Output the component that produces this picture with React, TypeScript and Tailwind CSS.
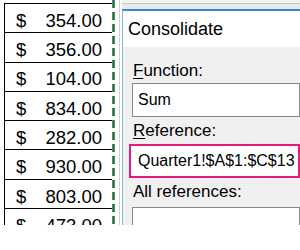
const amounts = ["354.00", "356.00", "104.00", "834.00", "282.00", "930.00", "803.00", "473.00"];

const Cell = ({ value }: { value: string }) => {
    return (
        <div className="h-[29.3px] shrink-0 border-t border-black flex items-end justify-between pl-[11px] pr-[10px] pb-[2px] text-[18.5px] leading-none text-black">
            <span>$</span>
            <span>{value}</span>
        </div>
    );
};

const Label = ({ hot, rest }: { hot: string; rest: string }) => (
    <div className="h-[20px] pl-[10px] text-[17px] leading-[20px] text-black">
        {hot && <span className="underline underline-offset-2">{hot}</span>}
        {rest}
    </div>
);

export default function App() {
    return (
        <div className="w-[300px] h-[250px] bg-white overflow-hidden" style={{ fontFamily: '"Liberation Sans", Arial, sans-serif' }}>
            <div className="h-[225px] flex overflow-hidden">
                {/* cells */}
                <div className="w-[112px] shrink-0 pt-[3px] pl-[4px]">
                    <div className="border-l border-black flex flex-col h-full">
                        {amounts.map((a) => (
                            <Cell key={a} value={a} />
                        ))}
                    </div>
                </div>
                {/* copy marquee */}
                <svg width="3" height="225" className="shrink-0">
                    <line x1="1.5" y1="0" x2="1.5" y2="225" stroke="#1e6b3c" strokeWidth="2.5" strokeDasharray="8 4" />
                </svg>
                <div className="w-[4px] shrink-0" />
                <div className="w-px shrink-0 bg-[#d0d0d0]" />
                <div className="w-[2px] shrink-0" />

                {/* dialog */}
                <div className="flex-1 flex flex-col min-w-0">
                    <div className="h-[9px] shrink-0 bg-[#e9e9e9] flex flex-col">
                        <div className="h-[3px] bg-[#f2f2f2]" />
                        <div className="h-px bg-[#c4c4c4]" />
                    </div>
                    <div className="flex-1 flex flex-col border-t-2 border-l border-t-[#3a86d4] border-l-[#92b4db]">
                        <div className="h-[36px] shrink-0 bg-white pl-[5px] pt-[7px] text-[18px] leading-[22px] text-black">
                            Consolidate
                        </div>
                        <div className="flex-1 bg-[#f0f0f0] pt-[14px] flex flex-col">
                            <Label hot="F" rest="unction:" />
                            <div className="mt-[2px] ml-[9px] h-[34px] shrink-0 bg-white border border-[#8a8a8a] flex items-center pl-[5px] text-[16px] text-black">
                                Sum
                            </div>
                            <div className="mt-[4px]">
                                <Label hot="R" rest="eference:" />
                            </div>
                            <div className="mt-[3px] ml-[6px] h-[34px] shrink-0 bg-white border-2 border-[#e6197c] flex items-center pl-[7px] text-[16px] text-black whitespace-nowrap">
                                Quarter1!$A$1:$C$13
                            </div>
                            <div className="mt-[4px]">
                                <Label hot="" rest="All references:" />
                            </div>
                            <div className="mt-[5px] ml-[9px] h-[60px] shrink-0 bg-white border border-[#8a8a8a]" />
                        </div>
                    </div>
                </div>
            </div>
        </div>
    );
}
